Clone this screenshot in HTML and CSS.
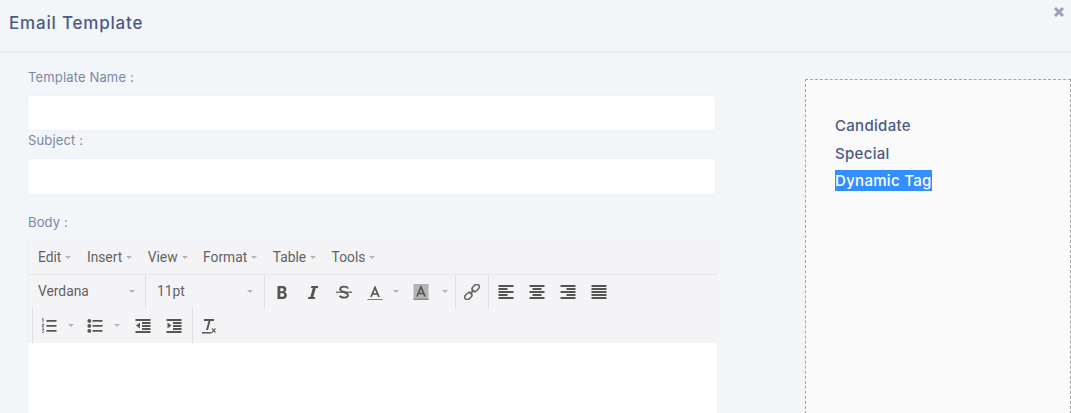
FILE: index.html
```html
<!DOCTYPE html>
<html lang="en">
<head>
<meta charset="utf-8">
<title>Email Template</title>
<link rel="stylesheet" href="styles.css">
</head>
<body>
<div class="modal">
  <header class="head">
    <h1 class="title">Email Template</h1>
    <svg class="close" viewBox="0 0 12 12" width="12" height="12"><path d="M2 2l8 8M10 2l-8 8" stroke="#9ba1b2" stroke-width="3" fill="none"/></svg>
  </header>
  <div class="main">
    <form class="form">
      <label class="lbl l1">Template Name :</label>
      <div class="input"></div>
      <label class="lbl l2">Subject :</label>
      <div class="input i2"></div>
      <label class="lbl l3">Body :</label>
      <div class="editor">
        <div class="menubar">
          <span class="mi">Edit<i class="caret"></i></span>
          <span class="mi">Insert<i class="caret"></i></span>
          <span class="mi">View<i class="caret"></i></span>
          <span class="mi">Format<i class="caret"></i></span>
          <span class="mi">Table<i class="caret"></i></span>
          <span class="mi">Tools<i class="caret"></i></span>
        </div>
        <div class="toolbar">
          <div class="row">
            <div class="sel s1">Verdana<i class="caret"></i></div>
            <div class="sel s2">11pt<i class="caret"></i></div>
            <div class="grp g1">
              <svg class="ic" viewBox="0 0 16 16"><path d="M3.500 2h5.300c4.300 0 4.700 5.300 1.700 6 3.500.7 3.300 7-1.500 7H3.500zM6.300 4.300v2.900h2c1.800 0 1.800-2.900 0-2.900zM6.300 9.200v3.500h2.300c2 0 2-3.500 0-3.500z" fill="#555" fill-rule="evenodd"/></svg>
              <svg class="ic" viewBox="0 0 16 16"><path d="M6.500 2h6.800l-.5 1.900h-2L8.300 13h2l-.5 2H2.800l.5-2h2l2.500-9.100h-2z" fill="#555"/></svg>
              <svg class="ic" viewBox="0 0 16 16"><path d="M0 8.200h16" stroke="#555" stroke-width="1.200"/><path d="M12 4.500C11 2 4.200 1.800 4.200 5.200c0 3.300 7.700 2.300 7.700 6 0 3.500-7 2.800-8.200.6" stroke="#555" stroke-width="1.900" fill="none"/></svg>
              <span class="split s-a"><svg class="ic" viewBox="0 0 16 16"><path d="M4 13L8 3.500 12 13M5.500 10h5" stroke="#555" stroke-width="1.700" fill="none"/><path d="M.5 15.700h15" stroke="#777" stroke-width="1.300"/></svg><i class="caret"></i></span>
              <span class="split s-b"><svg class="ic" viewBox="0 0 16 16"><path d="M.5 0h15v16H.5z" fill="#b4b4b4"/><path d="M4 12.500L8 3l4 9.500M5.500 9.500h5" stroke="#555" stroke-width="1.700" fill="none"/><path d="M.5 15.300h15" stroke="#8a8a8a" stroke-width="1.400"/></svg><i class="caret"></i></span>
            </div>
            <div class="grp g2">
              <svg class="ic" viewBox="0 0 16 16"><g fill="none" stroke="#666" stroke-width="1.600"><rect x="7.700" y="1.300" width="8" height="5.200" rx="2.600" transform="rotate(-45 11.700 3.900)"/><rect x=".3" y="9.500" width="8" height="5.200" rx="2.600" transform="rotate(-45 4.300 12.100)"/><path d="M6 10l4-4" stroke-width="1.800"/></g></svg>
            </div>
            <div class="grp g3">
              <svg class="ic" viewBox="0 0 16 16"><path d="M.5 1h15v2H.5zM.5 4h9v2h-9zM.5 7h15v2H.5zM.5 10h9v2h-9zM.5 13h15v2H.5z" fill="#555"/></svg>
              <svg class="ic" viewBox="0 0 16 16"><path d="M.5 1h15v2H.5zM3.500 4h9v2h-9zM.5 7h15v2H.5zM3.500 10h9v2h-9zM.5 13h15v2H.5z" fill="#555"/></svg>
              <svg class="ic" viewBox="0 0 16 16"><path d="M.5 1h15v2H.5zM6.500 4h9v2h-9zM.5 7h15v2H.5zM6.500 10h9v2h-9zM.5 13h15v2H.5z" fill="#555"/></svg>
              <svg class="ic" viewBox="0 0 16 16"><path d="M.5 1h15v2H.5zM.5 4h15v2H.5zM.5 7h15v2H.5zM.5 10h15v2H.5zM.5 13h15v2H.5z" fill="#555"/></svg>
            </div>
          </div>
          <div class="row r2">
            <div class="grp g4">
              <span class="split s-l"><svg class="ic" viewBox="0 0 16 16"><path d="M5.500 2h10v1.800h-10zM5.500 7h10v1.800h-10zM5.500 12h10v1.800h-10z" fill="#555"/><path d="M1 1.200l1-.7v3.600M1 6.300h2l-2 2.500h2M1 11h2l-1 1.300 1 1.200-1 1H1" stroke="#555" stroke-width=".9" fill="none"/></svg><i class="caret"></i></span>
              <span class="split s-l"><svg class="ic" viewBox="0 0 16 16"><path d="M5.500 2h10v1.800h-10zM5.500 7h10v1.800h-10zM5.500 12h10v1.800h-10z" fill="#555"/><circle cx="2.300" cy="2.900" r="1.900" fill="#555"/><circle cx="2.300" cy="7.900" r="1.900" fill="#555"/><circle cx="2.300" cy="12.900" r="1.900" fill="#555"/></svg><i class="caret"></i></span>
              <svg class="ic in" viewBox="0 0 16 16"><path d="M.5 1h15v2H.5zM7 4h8.500v2H7zM7 7h8.500v2H7zM7 10h8.500v2H7zM.5 13h15v2H.5z" fill="#555"/><path d="M5 4.500v6L1 7.500z" fill="#555"/></svg>
              <svg class="ic out" viewBox="0 0 16 16"><path d="M.5 1h15v2H.5zM7 4h8.500v2H7zM7 7h8.500v2H7zM7 10h8.500v2H7zM.5 13h15v2H.5z" fill="#555"/><path d="M1.500 4.500v6l4-3z" fill="#555"/></svg>
            </div>
            <div class="grp g5">
              <svg class="ic" viewBox="0 0 16 16"><path d="M3 1h10v1.900H9.500L7 12H5L7.500 2.900H3z" fill="#555"/><path d="M1 14.800h9.500" stroke="#555" stroke-width="1.500"/><path d="M11 10.500l3.500 4M14.500 10.500l-3.500 4" stroke="#666" stroke-width="1.200"/></svg>
            </div>
          </div>
        </div>
        <div class="content"></div>
      </div>
    </form>
    <aside class="side">
      <a class="tag">Candidate</a>
      <a class="tag">Special</a>
      <a class="tag"><span class="hl">Dynamic Tag</span></a>
    </aside>
  </div>
</div>
</body>
</html>
```
FILE: styles.css
```css
* { box-sizing: border-box; }
html, body { margin: 0; height: 413px; overflow: hidden; }
body { background: #f3f6f8; font-family: "Inter", "Open Sans", sans-serif; color: #4b5a85; }
.modal { height: 413px; display: flex; flex-direction: column; }
.head { height: 53px; flex: none; border-bottom: 2px solid #e6eaf2; padding-left: 9px; display: flex; justify-content: space-between; }
.title { margin: 13px 0 0; font-size: 17px; line-height: 20px; font-weight: 500; letter-spacing: .8px; color: #4b5a85; }
.close { margin: 6px 6px 0 0; }
.main { flex: 1; display: flex; min-height: 0; padding-left: 27px; }
.form { width: 691px; flex: none; display: flex; flex-direction: column; }
.lbl { font-size: 13px; line-height: 16px; letter-spacing: .15px; color: #7b86a6; display: block; padding-left: 1px; }
.l1 { margin-top: 16px; height: 26px; }
.l2 { height: 26px; margin-top: 1px; }
.l3 { margin-top: 19px; height: 26px; }
.input { height: 36px; width: 689px; background: #fff; border: 1px solid #eef1f7; border-radius: 4px; }
.i2 { height: 37px; }
.editor { flex: 1; border: 1px solid #eef1f7; border-bottom: 0; background: #f4f4f7; font-family: "Roboto", "Liberation Sans", sans-serif; color: #626262; font-size: 13.800px; border-radius: 3px 3px 0 0; display: flex; flex-direction: column; }
.menubar { height: 34px; flex: none; display: flex; align-items: center; padding: 0 0 2px 10px; gap: 15.500px; border-bottom: 1px solid #e6e7ec; }
.mi { display: inline-flex; align-items: center; line-height: 16px; }
.caret { display: inline-block; width: 0; height: 0; border: 3.500px solid transparent; border-top-color: #b5b5b5; border-bottom: 0; margin-left: 4px; margin-top: 1px; }
.toolbar { height: 68px; flex: none; }
.row { height: 33px; display: flex; align-items: stretch; }
.row.r2 { height: 35px; padding-left: 4px; }
.sel { display: flex; align-items: center; justify-content: space-between; padding: 0 4px 1px 10px; border-right: 1px solid #dedfe4; height: 33px; }
.s1 { width: 118px; }
.s2 { width: 119px; padding: 0 11px 1px 11px; }
.s1 .caret { margin-right: 6px; }
.grp { display: flex; align-items: center; height: 33px; border-right: 1px solid #dedfe4; }
.g1 { padding-left: 9px; gap: 15px; padding-right: 7px; }
.g2 { padding: 0 8px; }
.g3 { padding-left: 9px; gap: 15px; border-right: 0; }
.g4 { border-left: 1px solid #dedfe4; padding: 0 9.500px 0 8px; gap: 13px; height: 35px; }
.g5 { padding-left: 8px; border-right: 0; height: 35px; }
.ic { width: 16px; height: 16px; flex: none; }
.split { display: inline-flex; align-items: center; gap: 10px; }
.split .caret { margin: 0; }
.s-b { gap: 13px; margin-left: -1px; }
.s-l { gap: 11px; }
.ic.in { margin-left: 2px; }
.ic.out { margin-left: 2px; }
.content { flex: 1; background: #fff; }
.side { width: 266px; height: 340px; margin: 26px 0 0 87px; flex: none; border: 1px dashed #a3a3a3; background: #fafafa; padding: 32px 0 0 29px; display: flex; flex-direction: column; }
.tag { font-size: 15px; line-height: 27.500px; font-weight: 500; letter-spacing: .3px; color: #4b5a85; display: block; }
.hl { background: #338fff; color: #fff; padding: 1px 0; }
```
